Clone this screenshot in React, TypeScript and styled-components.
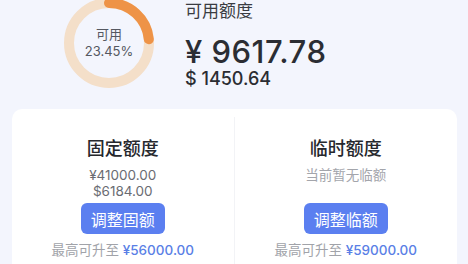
import React from "react";
import styled, { createGlobalStyle } from "styled-components";

const Global = createGlobalStyle`
  html, body { margin: 0; padding: 0; background: #f3f5fd; }
  body { font-family: Inter, "Noto Sans CJK SC", sans-serif; width: 468px; height: 264px; overflow: hidden; }
`;

const Page = styled.div`
  width: 468px;
  height: 264px;
  background: #f3f5fd;
  overflow: hidden;
  display: flex;
  flex-direction: column;
`;

const Summary = styled.div`
  display: flex;
  align-items: flex-start;
  height: 111px;
  margin-top: -2px;
`;

const DonutWrap = styled.div`
  position: relative;
  width: 90px;
  height: 90px;
  margin-left: 64px;
  flex: none;
`;

const DonutLabel = styled.div`
  position: absolute;
  inset: 0;
  display: flex;
  flex-direction: column;
  align-items: center;
  justify-content: center;
  color: #555861;
  font-size: 13px;
  line-height: 17px;
`;

const Amounts = styled.div`
  display: flex;
  flex-direction: column;
  margin-left: 31px;
  padding-top: 2px;
  color: #2b2d33;
`;

const Title = styled.div`
  font-size: 17px;
  line-height: 22px;
  color: #3a3c42;
`;

const Big = styled.div`
  font-size: 31px;
  font-weight: 500;
  line-height: 32px;
  margin-top: 14px;
  letter-spacing: 0.5px;
`;

const Small = styled.div`
  font-size: 18px;
  font-weight: 500;
  line-height: 20px;
  margin-top: 1px;
`;

const Card = styled.div`
  margin: 0 11px 0 12px;
  background: #ffffff;
  border-radius: 10px 10px 0 0;
  display: grid;
  grid-template-columns: 1fr 1fr;
  flex: 1;
  padding-top: 8px;
`;

const Column = styled.div<{ $divider?: boolean }>`
  display: flex;
  flex-direction: column;
  align-items: center;
  padding-top: 19px;
  border-right: ${(p) => (p.$divider ? "1px solid #f2f3f6" : "none")};
`;

const ColTitle = styled.div`
  font-size: 18px;
  font-weight: 500;
  line-height: 26px;
  color: #26282d;
`;

const Info = styled.div`
  height: 41px;
  box-sizing: border-box;
  display: flex;
  flex-direction: column;
  align-items: center;
  padding-top: 5px;
`;

const InfoLine = styled.div<{ $muted?: boolean }>`
  font-size: 13.5px;
  line-height: 16px;
  color: ${(p) => (p.$muted ? "#a3a5ab" : "#6a6c72")};
`;

const Button = styled.button`
  width: 84px;
  height: 31px;
  border: none;
  border-radius: 6px;
  background: #5b7ff0;
  color: #ffffff;
  font-family: inherit;
  font-size: 16px;
  padding: 0;
`;

const Limit = styled.div`
  font-size: 13.5px;
  line-height: 16px;
  margin-top: 8px;
  color: #a1a3a9;
  span { color: #5a7fe6; font-weight: 500; }
`;

function Donut({ pct }: { pct: number }) {
  const r = 40;
  const c = 2 * Math.PI * r;
  return (
    <svg width="90" height="90" viewBox="0 0 90 90">
      <circle cx="45" cy="45" r={r} fill="none" stroke="#f4dfc9" strokeWidth="10" />
      <circle
        cx="45"
        cy="45"
        r={r}
        fill="none"
        stroke="#ee9347"
        strokeWidth="10"
        strokeDasharray={`${c * pct} ${c}`}
        strokeLinecap="round"
        transform="rotate(-90 45 45)"
      />
    </svg>
  );
}

export default function App() {
  return (
    <Page>
      <Global />
      <Summary>
        <DonutWrap>
          <Donut pct={0.2345} />
          <DonutLabel>
            <div>可用</div>
            <div>23.45%</div>
          </DonutLabel>
        </DonutWrap>
        <Amounts>
          <Title>可用额度</Title>
          <Big>¥ 9617.78</Big>
          <Small>$ 1450.64</Small>
        </Amounts>
      </Summary>
      <Card>
        <Column $divider>
          <ColTitle>固定额度</ColTitle>
          <Info>
            <InfoLine>¥41000.00</InfoLine>
            <InfoLine>$6184.00</InfoLine>
          </Info>
          <Button>调整固额</Button>
          <Limit>
            最高可升至 <span>¥56000.00</span>
          </Limit>
        </Column>
        <Column>
          <ColTitle>临时额度</ColTitle>
          <Info>
            <InfoLine $muted>当前暂无临额</InfoLine>
          </Info>
          <Button>调整临额</Button>
          <Limit>
            最高可升至 <span>¥59000.00</span>
          </Limit>
        </Column>
      </Card>
    </Page>
  );
}
